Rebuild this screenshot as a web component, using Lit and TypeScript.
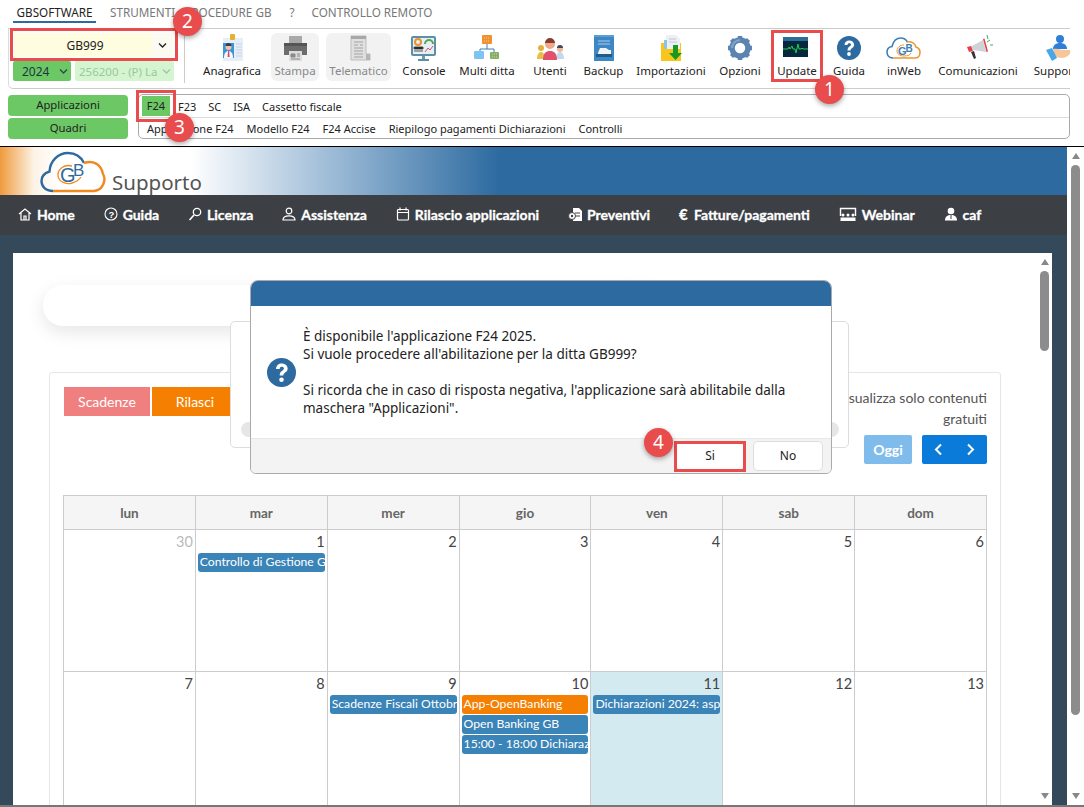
import { LitElement, css, html, svg } from 'lit';
import { customElement } from 'lit/decorators.js';

const icons: Record<string, any> = {
  anagrafica: svg`
    <rect x="5" y="4" width="20" height="23" fill="#e6eef8"/>
    <rect x="12" y="0" width="5" height="6" rx="1" fill="#e8b030"/>
    <rect x="5" y="9" width="11" height="15" fill="#3f93dc"/>
    <circle cx="10.5" cy="13" r="3" fill="#f3c3a5"/>
    <path d="M7.5 12a3 3 0 0 1 6 0z" fill="#33404f"/>
    <path d="M6 24c0-5 2-7 4.500-7s4.500 2 4.500 7z" fill="#f7f7f7"/>
    <path d="M10 17h1.200l.4 6h-2z" fill="#d8425a"/>
    <path d="M18 10h6M18 13h6M18 16h6M18 19h6M18 22h6" stroke="#c7d4e8" stroke-width="1"/>`,
  stampa: svg`
    <rect x="8" y="2" width="13" height="8" fill="#a9a9a9"/>
    <path d="M3 12a3 3 0 0 1 3-3h17a3 3 0 0 1 3 3v9H3z" fill="#6c6c6c"/>
    <rect x="3" y="9" width="23" height="3" fill="#555"/>
    <rect x="8" y="17" width="13" height="10" fill="#dcdcdc"/>
    <path d="M10 20h4v3h-4zM16 20h3M16 22h3M10 25h9" stroke="#8a8a8a" fill="#8a8a8a"/>`,
  telematico: svg`
    <path d="M6 2h15v18h4v6H6z" fill="#e0e0e0" stroke="#bdbdbd"/>
    <rect x="6" y="2" width="15" height="3" fill="#a8a8a8"/>
    <path d="M9 8h9M9 11h4M15 11h3M9 14h9M9 17h9M9 20h9M9 23h9" stroke="#a3a3a3"/>
    <rect x="21" y="20" width="4" height="6" fill="#b5b5b5"/>`,
  console: svg`
    <rect x="1" y="2" width="25" height="20" rx="2" fill="#5f8fa8"/>
    <rect x="3" y="4" width="21" height="16" fill="#e6f0f3"/>
    <circle cx="8" cy="8" r="3" fill="none" stroke="#e8932c" stroke-width="2"/>
    <path d="M15 10a4 4 0 0 1 8 0" fill="none" stroke="#52a65a" stroke-width="2"/>
    <path d="M4 13h9v2H4zM4 17h9" stroke="#555"/>
    <path d="M15 18l3-4 2 2 3-4" stroke="#d8546a" fill="none"/>
    <rect x="12" y="22" width="3" height="3" fill="#6f97ad"/>
    <rect x="8" y="25" width="11" height="2" fill="#5f8fa8"/>`,
  multi: svg`
    <rect x="9" y="1" width="10" height="9" rx="1" fill="#f09030"/>
    <path d="M14 10v5M7 15h14M7 15v3M21 15v3" stroke="#3d7fb5" stroke-width="1" fill="none"/>
    <rect x="1" y="17" width="10" height="8" rx="1" fill="#7cc4f4"/>
    <rect x="17" y="18" width="9" height="7" rx="1" fill="#7fb06a"/>
    <path d="M11 4h6M11 7h6M19 20h5M19 23h5" stroke="#f8c888" stroke-dasharray="1 1"/>`,
  utenti: svg`
    <path d="M1 25c0-5 2-7 4-7s4 2 4 7z" fill="#e8c048"/>
    <circle cx="5" cy="14" r="3" fill="#e8b038"/>
    <path d="M20 25c0-5 2-7 4-7s4 2 4 7z" fill="#c6d8ee"/>
    <circle cx="24" cy="15" r="3" fill="#f0b898"/>
    <path d="M21 14a3 3 0 0 1 6 0z" fill="#3c4a5a"/>
    <path d="M7 26c0-7 3-9 7-9s7 2 7 9z" fill="#e3506c"/>
    <circle cx="14" cy="10" r="5" fill="#eeaa88"/>
    <path d="M9 9a5 5 0 0 1 10 0c-3 0-7 0-10 0z" fill="#8a3c32"/>`,
  backup: svg`
    <path d="M4 1h17a3 3 0 0 1 3 3v23H4z" fill="#3d87c4"/>
    <rect x="4" y="1" width="20" height="2" fill="#5b9fd6"/>
    <path d="M8 7h12M8 10h12" stroke="#a8d0ee"/>
    <path d="M8 19l2-5h6l3 2h2v4H8z" fill="#f2f2f2"/>
    <rect x="6" y="20" width="16" height="3" fill="#1f5a8c"/>`,
  importazioni: svg`
    <path d="M4 9h4V6h2v3h14v18H4z" fill="#f7c51c"/>
    <path d="M9 1h10l4 4v10H9z" fill="#eceff4"/>
    <path d="M7 6h3v9H7z" fill="#8cc4e4"/>
    <path d="M12 5h7M12 8h8" stroke="#c8c8d0"/>
    <path d="M16 11h5v8h4l-6.500 7L12 19h4z" fill="#19991f"/>`,
  opzioni: svg`
    <g fill="none" stroke="#5b84b1">
      <circle cx="14" cy="14" r="8" stroke-width="5.500"/>
      <path d="M14 2v4M14 22v4M2 14h4M22 14h4M5.500 5.500l3 3M19.500 19.500l3 3M5.500 22.500l3-3M19.500 8.500l3-3" stroke-width="4.500"/>
    </g>
    <path d="M14 6a8 8 0 0 0-8 8" fill="none" stroke="#7ea6cf" stroke-width="2"/>`,
  update: svg`
    <rect x="0" y="3" width="25" height="20" fill="#06283c"/>
    <rect x="0" y="3" width="25" height="4" fill="#2a6c9a"/>
    <path d="M0 15h5l1-2 1 2 2-3 1 3h2l1 4 2-9 1 5h2l1-1 1 1h5" fill="none" stroke="#1fd04a" stroke-width="1"/>`,
  guida: svg`
    <circle cx="14" cy="14" r="12" fill="#2c6aa0"/>
    <path d="M9.500 11c0-2.800 2.200-4.500 4.600-4.500s5 1.500 5 4.200c0 3.400-3.600 3.200-3.600 5.800h-3c0-4.200 3.500-3.900 3.500-5.800 0-.9-.9-1.400-1.900-1.400s-1.500.6-1.600 1.700z" fill="#fff"/>
    <circle cx="14" cy="20" r="1.900" fill="#fff"/>`,
  inweb: svg`
    <g transform="translate(-5 0)">
      <path d="M8 24c-4 0-6-3-6-6 0-3 2-5 5-5.500C8 8 11 4 16 4c3 0 5 1.500 6.500 4" fill="none" stroke="#3d7fb5" stroke-width="1.600"/>
      <path d="M22 8c4-1 8 1 9 5 3 1 4 3 4 5.500 0 3-2 5.500-5 5.500H8" fill="none" stroke="#ef9430" stroke-width="1.600"/>
      <path d="M19 11c-4 0-7 2.500-7 6 0 3 3 5 7 5s6-1 7-3" fill="none" stroke="#ef9430" stroke-width="1"/>
      <text x="13" y="21" font-family="Liberation Sans" font-weight="700" font-size="11" fill="#3d7fb5">G</text>
      <text x="20.500" y="18" font-family="Liberation Sans" font-weight="700" font-size="10" fill="#3d7fb5">B</text>
    </g>`,
  comunicazioni: svg`
    <path d="M6 13l13-7 3 12-13-2z" fill="#cfd3d8"/>
    <path d="M19 5l1.500-.5 3.500 13-1.500.5z" fill="#e8404a"/>
    <path d="M3 13l4-1 2 5-4 1z" fill="#e8404a"/>
    <path d="M7 18l3-1 2 7-2 1z" fill="#333"/>
    <path d="M23 8l3-2M23 1l1 4M26 11h3" stroke="#35b060" stroke-width="1"/>`,
  supporto: svg`
    <circle cx="15" cy="5" r="4" fill="#2f7fd8"/>
    <path d="M8 15c0-4 3-6 7-6s7 2 7 6z" fill="#2f7fd8"/>
    <path d="M8 15c5-1 8 1 9 1h8c2 0 3 1 1 3-3 3-6 5-9 5-3 0-5-1-7-2z" fill="#f7c698"/>
    <path d="M1 16l6-2 5 10-5 3z" fill="#4aa6e8"/>`,
};

const tools = [
  { label: 'Anagrafica', icon: 'anagrafica', width: 64 },
  { label: 'Stampa', icon: 'stampa', width: 48, off: true },
  { label: 'Telematico', icon: 'telematico', width: 65, off: true },
  { label: 'Console', icon: 'console', width: 52 },
  { label: 'Multi ditta', icon: 'multi', width: 60 },
  { label: 'Utenti', icon: 'utenti', width: 52 },
  { label: 'Backup', icon: 'backup', width: 41 },
  { label: 'Importazioni', icon: 'importazioni', width: 80 },
  { label: 'Opzioni', icon: 'opzioni', width: 44 },
  { label: 'Update', icon: 'update', width: 56 },
  { label: 'Guida', icon: 'guida', width: 34 },
  { label: 'inWeb', icon: 'inweb', width: 62 },
  { label: 'Comunicazioni', icon: 'comunicazioni', width: 72 },
  { label: 'Supporto', icon: 'supporto', width: 76 },
];

const navIcon: Record<string, any> = {
  home: svg`<path d="M1 7l6-5 6 5M3 6v7h8V6M6 13V9h2v4" fill="none" stroke="#fff" stroke-width="1.200"/>`,
  help: svg`<circle cx="7" cy="7" r="6" fill="none" stroke="#fff" stroke-width="1.100"/><text x="4.600" y="10.500" font-family="Liberation Sans" font-weight="700" font-size="9.500" fill="#fff">?</text>`,
  key: svg`<circle cx="9" cy="5" r="3.700" fill="none" stroke="#fff" stroke-width="1.300"/><path d="M6 8l-4.500 5" stroke="#fff" stroke-width="1.600"/>`,
  user: svg`<circle cx="7" cy="4" r="2.800" fill="none" stroke="#fff" stroke-width="1.200"/><path d="M1 13c0-3 2.500-4.200 6-4.200s6 1.200 6 4.200z" fill="none" stroke="#fff" stroke-width="1.200"/>`,
  calendar: svg`<rect x="1.500" y="2.500" width="11" height="10.500" rx="1" fill="none" stroke="#fff" stroke-width="1.200"/><path d="M1.500 5.500h11M4 .5v3M10 .5v3" stroke="#fff" stroke-width="1.200"/>`,
  quote: svg`<path d="M5 1h6l3 3v10H5z" fill="#fff"/><circle cx="4" cy="9" r="3.500" fill="#fff" stroke="#3c4045"/><circle cx="4" cy="9" r="1.200" fill="#3c4045"/><path d="M7 6h5M8 9h4" stroke="#3c4045"/>`,
  webinar: svg`<path d="M1.500 9V1.500h15V9" fill="none" stroke="#fff" stroke-width="1.400"/><g fill="#fff"><circle cx="4" cy="8" r="1.500"/><circle cx="9" cy="8" r="1.500"/><circle cx="14" cy="8" r="1.500"/><path d="M1.500 14v-3.500h5V14zM6.500 14v-3.500h5V14zM11.500 14v-3.500h5V14z"/></g>`,
  account: svg`<circle cx="7" cy="4" r="3.300" fill="#fff"/><path d="M1 13.500c0-4 2.500-5.500 6-5.500s6 1.500 6 5.500z" fill="#fff"/><path d="M7 8v4" stroke="#3c4045"/>`,
};

const navItems = [
  { label: 'Home', icon: 'home' },
  { label: 'Guida', icon: 'help' },
  { label: 'Licenza', icon: 'key' },
  { label: 'Assistenza', icon: 'user' },
  { label: 'Rilascio applicazioni', icon: 'calendar' },
  { label: 'Preventivi', icon: 'quote' },
  { label: 'Fatture/pagamenti', icon: '' },
  { label: 'Webinar', icon: 'webinar' },
  { label: 'caf', icon: 'account' },
];

type Ev = { text: string; orange?: boolean };
type Day = { n: number; muted?: boolean; today?: boolean; events?: Ev[] };

const days: Day[] = [
  { n: 30, muted: true },
  { n: 1, events: [{ text: 'Controllo di Gestione GB' }] },
  { n: 2 }, { n: 3 }, { n: 4 }, { n: 5 }, { n: 6 },
  { n: 7 }, { n: 8 },
  { n: 9, events: [{ text: 'Scadenze Fiscali Ottobre' }] },
  { n: 10, events: [{ text: 'App-OpenBanking', orange: true }, { text: 'Open Banking GB' }, { text: '15:00 - 18:00 Dichiarazioni' }] },
  { n: 11, today: true, events: [{ text: 'Dichiarazioni 2024: aspetti' }] },
  { n: 12 }, { n: 13 },
];

@customElement('app-root')
export class AppRoot extends LitElement {
  static styles = css`
    :host {
      display: flex;
      flex-direction: column;
      position: relative;
      width: 1084px;
      height: 807px;
      overflow: hidden;
      background: #fff;
      font-family: 'Noto Sans', sans-serif;
      color: #222;
    }

    /* desktop app part */
    .app {
      flex: none;
      box-sizing: border-box;
      height: 147px;
      padding-top: 3px;
      background: #fff;
      border-bottom: 1px solid #000;
    }
    .tabs {
      display: flex;
      height: 20px;
      margin-left: 13px;
      font-size: 11.700px;
      line-height: 19px;
      color: #777;
    }
    .tabs span { white-space: nowrap; }
    .tabs .active {
      width: 83px;
      height: 18px;
      text-align: center;
      color: #222;
      border-bottom: 2px solid #2c6aa0;
      margin-right: 14px;
    }
    .tabs .proc { margin-left: 9px; }
    .tabs .help { margin-left: 18px; }
    .tabs .remote { margin-left: 17px; }
    .ribbon {
      display: flex;
      height: 59px;
      margin: 5px 14px 0 8px;
      border-top: 1px solid #ccc;
      border-bottom: 1px solid #ccc;
      border-left: 1px solid #ddd;
      border-bottom-left-radius: 5px;
    }
    .picker {
      flex: none;
      box-sizing: border-box;
      width: 175px;
      padding: 4px 0 0 5px;
    }
    .combo {
      display: flex;
      align-items: center;
      width: 159px;
      height: 24px;
      background: #fffde0;
      font-size: 12px;
    }
    .combo b { flex: 1; text-align: center; font-weight: 400; padding-left: 4px; }
    .combo i { display: flex; align-items: center; justify-content: center; width: 21px; height: 24px; background: #fbfbf2; }
    .selects { display: flex; gap: 4px; margin: 4px 0 0 -1px; }
    .select {
      display: flex;
      align-items: center;
      height: 20px;
      border-radius: 2px;
      font-size: 11.500px;
      box-sizing: border-box;
      padding-left: 4px;
      white-space: nowrap;
      overflow: hidden;
    }
    .select span { flex: 1; overflow: hidden; }
    .select svg { flex: none; margin: 0 3px; }
    .year { width: 58px; background: #6cc865; color: #234; padding-left: 9px; font-size: 12px; }
    .firm { width: 99px; background: #d4f5d0; color: #9cc89c; }
    .tools {
      flex: 1;
      display: flex;
      gap: 7px;
      height: 50px;
      margin-top: 1px;
      padding: 3px 0 0 15px;
      border-left: 1px solid #ccc;
      overflow: hidden;
    }
    .tool {
      flex: none;
      display: flex;
      flex-direction: column;
      align-items: center;
      height: 48px;
      border-radius: 6px;
      font-size: 11.500px;
      line-height: 16px;
      white-space: nowrap;
    }
    .tool svg { flex: none; width: 28px; height: 28px; margin: 1px 0; overflow: visible; }
    .tool.off { background: #f2f2f2; color: #888; }
    .apps { display: flex; gap: 10px; margin: 5px 14px 0 8px; }
    .app-btns { display: flex; flex-direction: column; gap: 2px; width: 120px; padding-top: 1px; }
    .app-btns span {
      height: 21px;
      line-height: 20px;
      text-align: center;
      font-size: 11.300px;
      background: #6cc865;
      border-radius: 4px;
    }
    .app-box {
      flex: 1;
      height: 45px;
      box-sizing: border-box;
      border: 1px solid #aaa;
      border-radius: 5px;
      font-size: 11px;
    }
    .app-row {
      display: flex;
      align-items: center;
      height: 22px;
      gap: 12px;
      padding-left: 3px;
      white-space: nowrap;
    }
    .app-row.sub { padding-left: 8px; height: 21px; border-top: 1px solid #ddd; gap: 13px; }
    .app-row .on { background: #6cc865; width: 28px; height: 20px; line-height: 20px; text-align: center; margin-right: -4px; }

    /* website in the embedded browser */
    .site { flex: 1; display: flex; min-height: 0; }
    .main { flex: none; width: 1067px; display: flex; flex-direction: column; }
    .banner {
      flex: none;
      display: flex;
      height: 48px;
      box-sizing: border-box;
      background: linear-gradient(90deg, #ef9a3c 0, #fdf3e6 34px, #fff 60px, #fff 190px, #9ebcd7 330px, #2c6aa0 500px);
    }
    .banner svg { margin: 4px 0 0 40px; }
    .banner span { font-size: 20.500px; line-height: 20px; color: #555; margin: 25px 0 0 4px; font-family: 'Noto Sans', sans-serif; }
    .nav {
      flex: none;
      display: flex;
      align-items: center;
      gap: 28.800px;
      box-sizing: border-box;
      height: 40px;
      padding: 0 0 2px 18px;
      background: #3c4045;
      color: #fff;
      font-family: Lato, sans-serif;
      font-weight: 700;
      font-size: 14px;
      white-space: nowrap;
      -webkit-text-stroke: 0.3px #fff;
    }
    .nav span { display: flex; align-items: center; gap: 5px; }
    .nav svg { flex: none; height: 14px; }
    .nav em { font-style: normal; font-size: 15px; width: 10px; }
    .content {
      flex: 1;
      display: flex;
      min-height: 0;
      padding: 18px 15px 0 13px;
      background: #34495a;
    }
    .panel {
      flex: 1;
      min-width: 0;
      position: relative;
      overflow: hidden;
      background: #fff;
      font-family: Lato, sans-serif;
    }
    .pill {
      width: 620px;
      height: 41px;
      margin: 32px 0 0 30px;
      border-radius: 20px;
      background: #fff;
      box-shadow: 0 6px 18px rgba(0, 0, 0, 0.1);
    }
    .card {
      margin: 46px 36px 0;
      padding: 14px 13px 0 14px;
      border: 1px solid #e3e6ea;
      border-radius: 3px;
      height: 600px;
    }
    .cal-bar { display: flex; justify-content: space-between; }
    .filters { display: flex; gap: 2px; }
    .filters span {
      width: 86px;
      height: 29px;
      line-height: 29px;
      text-align: center;
      color: #fff;
      font-size: 14px;
    }
    .filters .pink { background: #f08080; }
    .filters .orange { background: #f57f00; }
    .cal-right { width: 170px; text-align: right; font-size: 14px; line-height: 21px; color: #555; }
    .cal-right p { margin: 0 0 6px; }
    .cal-btns { display: flex; justify-content: flex-end; gap: 10px; }
    .today-btn {
      width: 48px;
      height: 29px;
      line-height: 29px;
      text-align: center;
      color: #fff;
      background: #7fbcec;
      border-radius: 2px;
      font-weight: 700;
    }
    .arrows {
      display: flex;
      align-items: center;
      justify-content: space-around;
      width: 65px;
      height: 29px;
      background: #0a7bd8;
      border-radius: 2px;
    }
    .grid {
      display: grid;
      grid-template-columns: repeat(7, 1fr);
      grid-template-rows: 34px;
      grid-auto-rows: 142px;
      margin: 31px 0 0 -1px;
      border-left: 1px solid #ccc;
      border-top: 1px solid #ccc;
    }
    .head {
      line-height: 35px;
      text-align: center;
      font-weight: 700;
      font-size: 13.500px;
      color: #666;
      background: #f5f5f5;
      border-right: 1px solid #ccc;
      border-bottom: 1px solid #ccc;
    }
    .cell { min-width: 0; border-right: 1px solid #ccc; border-bottom: 1px solid #ccc; }
    .cell.today { background: #d2eaf0; }
    .num { height: 23px; line-height: 23px; padding-right: 2px; text-align: right; font-size: 14.500px; color: #444; }
    .muted .num { color: #bbb; }
    .event {
      height: 19px;
      line-height: 18px;
      margin: 0 2px 1px;
      padding: 0 2px;
      border-radius: 3px;
      background: #3a84b8;
      color: #fff;
      font-size: 12.200px;
      white-space: nowrap;
      overflow: hidden;
    }
    .event.orange { background: #f57f00; }
    .behind {
      position: absolute;
      left: 217px;
      top: 68px;
      width: 619px;
      height: 127px;
      box-sizing: border-box;
      background: #fff;
      border: 1px solid #ddd;
      border-radius: 5px;
    }
    .behind i {
      position: absolute;
      left: 10px;
      right: 9px;
      top: 100px;
      height: 15px;
      border-radius: 8px;
      background: #e6e6e6;
    }

    /* scrollbars */
    .bar {
      flex: none;
      display: flex;
      flex-direction: column;
      align-items: center;
      background: #fff;
      box-sizing: border-box;
    }
    .bar.inner { width: 15px; }
    .bar.outer { width: 17px; }
    .up, .down { flex: none; width: 0; height: 0; border-left: 4.500px solid transparent; border-right: 4.500px solid transparent; }
    .up { margin-top: 6px; border-bottom: 6px solid #888; }
    .down { margin: auto 0 6px; border-top: 6px solid #888; }
    .thumb { flex: none; width: 9px; margin-top: 6px; border-radius: 5px; background: #8c8c8c; }
    .inner .thumb { height: 80px; }
    .outer .thumb { height: 550px; }
    .edge { flex: none; height: 2px; background: #777; }

    /* message box */
    .dialog {
      position: absolute;
      left: 250px;
      top: 280px;
      width: 582px;
      height: 194px;
      box-sizing: border-box;
      display: flex;
      flex-direction: column;
      background: #fff;
      border: 1px solid #aaa;
      border-radius: 8px 8px 6px 6px;
      overflow: hidden;
      font-size: 13.500px;
      line-height: 18px;
    }
    .dialog header { flex: none; height: 25px; background: #2c6aa0; }
    .dialog .msg { flex: 1; display: flex; align-items: center; gap: 7px; padding-left: 16px; }
    .dialog p { margin: 0; }
    .dialog .msg svg { flex: none; width: 29px; height: 29px; }
    .dialog footer {
      flex: none;
      display: flex;
      align-items: center;
      justify-content: flex-end;
      gap: 9px;
      height: 34px;
      padding-right: 8px;
      background: #f3f3f3;
      border-top: 1px solid #e8e8e8;
    }
    .btn {
      box-sizing: border-box;
      width: 70px;
      height: 30px;
      line-height: 28px;
      text-align: center;
      font-size: 12px;
      background: #fff;
      border: 1px solid #ddd;
      border-radius: 5px;
    }
    .btn.yes { width: 68px; }

    /* tutorial marks over the screenshot */
    .mark { position: absolute; box-sizing: border-box; border: 3.500px solid #e84c4c; }
    .m-combo { left: 10px; top: 28px; width: 168px; height: 33px; }
    .m-update { left: 771px; top: 30px; width: 52px; height: 52px; }
    .m-f24 { left: 136px; top: 90px; width: 40px; height: 32px; }
    .m-si { left: 674px; top: 441px; width: 72px; height: 31px; }
    .badge {
      position: absolute;
      width: 29px;
      height: 29px;
      line-height: 29px;
      text-align: center;
      border-radius: 50%;
      background: #e84c4c;
      color: #fff;
      font-size: 19px;
      box-shadow: 0 2px 5px rgba(0, 0, 0, 0.35);
    }
    .b1 { left: 815px; top: 75px; }
    .b2 { left: 173px; top: 7px; }
    .b3 { left: 165px; top: 113px; }
    .b4 { left: 644px; top: 428px; }
  `;

  private chevron(color: string, w = 9) {
    return html`<svg width=${w} height="7" viewBox="0 0 9 7"><path d="M1 1.500l3.500 3.500L8 1.500" fill="none" stroke=${color} stroke-width="1.300"/></svg>`;
  }

  private renderApp() {
    return html`
      <div class="app">
        <div class="tabs">
          <span class="active">GBSOFTWARE</span>
          <span>STRUMENTI</span>
          <span class="proc">PROCEDURE GB</span>
          <span class="help">?</span>
          <span class="remote">CONTROLLO REMOTO</span>
        </div>
        <div class="ribbon">
          <div class="picker">
            <div class="combo"><b>GB999</b><i>${this.chevron('#222')}</i></div>
            <div class="selects">
              <div class="select year"><span>2024</span>${this.chevron('#345')}</div>
              <div class="select firm"><span>256200 - (P) La</span>${this.chevron('#9cc89c')}</div>
            </div>
          </div>
          <div class="tools">
            ${tools.map(
              (t) => html`
                <div class="tool ${t.off ? 'off' : ''}" style="width:${t.width}px">
                  <svg viewBox="0 0 28 28">${icons[t.icon]}</svg>
                  <span>${t.label}</span>
                </div>
              `
            )}
          </div>
        </div>
        <div class="apps">
          <div class="app-btns"><span>Applicazioni</span><span>Quadri</span></div>
          <div class="app-box">
            <div class="app-row">
              <span class="on">F24</span><span>F23</span><span>SC</span><span>ISA</span><span>Cassetto fiscale</span>
            </div>
            <div class="app-row sub">
              <span>Applicazione F24</span><span>Modello F24</span><span>F24 Accise</span>
              <span>Riepilogo pagamenti Dichiarazioni</span><span>Controlli</span>
            </div>
          </div>
        </div>
      </div>
    `;
  }

  private renderBanner() {
    return html`
      <div class="banner">
        <svg width="68" height="42" viewBox="0 0 68 42">
          <path d="M13 40C5 40 1.500 35 1.500 30c0-5 3-8 8-9.500C10 10 18 2 28 2c7 0 13 4 16 10" fill="none" stroke="#2c6aa0" stroke-width="2.400"/>
          <path d="M44 12c9-3 17 1 19 11 3 5 1 16-9 17H13" fill="none" stroke="#ef8a1e" stroke-width="2.400"/>
          <path d="M32 15c-8-2-14 3-14 9 0 6 7 10 14 8 4-1 7-3 9-6" fill="none" stroke="#ef8a1e" stroke-width="1.300"/>
          <text x="20" y="31" font-family="Liberation Sans" font-size="20" fill="#2c6aa0">G</text>
          <text x="33" y="25" font-family="Liberation Sans" font-size="17" fill="#2c6aa0">B</text>
        </svg>
        <span>Supporto</span>
      </div>
      <div class="nav">
        ${navItems.map(
          (n) => html`
            <span>
              ${n.icon
                ? html`<svg viewBox="0 0 ${n.icon === 'webinar' ? 18 : 14} 14" width=${n.icon === 'webinar' ? 18 : 14}>${navIcon[n.icon]}</svg>`
                : html`<em>€</em>`}
              ${n.label}
            </span>
          `
        )}
      </div>
    `;
  }

  private renderCalendar() {
    return html`
      <div class="card">
        <div class="cal-bar">
          <div class="filters"><span class="pink">Scadenze</span><span class="orange">Rilasci</span></div>
          <div class="cal-right">
            <p>Visualizza solo contenuti gratuiti</p>
            <div class="cal-btns">
              <span class="today-btn">Oggi</span>
              <span class="arrows">
                <svg width="9" height="13" viewBox="0 0 9 13"><path d="M7 1.500L2 6.500l5 5" fill="none" stroke="#fff" stroke-width="2"/></svg>
                <svg width="9" height="13" viewBox="0 0 9 13"><path d="M2 1.500l5 5-5 5" fill="none" stroke="#fff" stroke-width="2"/></svg>
              </span>
            </div>
          </div>
        </div>
        <div class="grid">
          ${['lun', 'mar', 'mer', 'gio', 'ven', 'sab', 'dom'].map((d) => html`<div class="head">${d}</div>`)}
          ${days.map(
            (d) => html`
              <div class="cell ${d.muted ? 'muted' : ''} ${d.today ? 'today' : ''}">
                <div class="num">${d.n}</div>
                ${(d.events || []).map((e) => html`<div class="event ${e.orange ? 'orange' : ''}">${e.text}</div>`)}
              </div>
            `
          )}
        </div>
      </div>
    `;
  }

  render() {
    return html`
      ${this.renderApp()}
      <div class="site">
        <div class="main">
          ${this.renderBanner()}
          <div class="content">
            <div class="panel">
              <div class="pill"></div>
              ${this.renderCalendar()}
              <div class="behind"><i></i></div>
            </div>
            <div class="bar inner"><div class="up"></div><div class="thumb"></div><div class="down"></div></div>
          </div>
        </div>
        <div class="bar outer"><div class="up"></div><div class="thumb"></div><div class="down"></div></div>
      </div>
      <div class="edge"></div>

      <div class="dialog">
        <header></header>
        <div class="msg">
          <svg viewBox="2 2 24 24">${icons.guida}</svg>
          <p>
            È disponibile l'applicazione F24 2025.<br />
            Si vuole procedere all'abilitazione per la ditta GB999?<br /><br />
            Si ricorda che in caso di risposta negativa, l'applicazione sarà abilitabile dalla<br />
            maschera "Applicazioni".
          </p>
        </div>
        <footer><div class="btn yes">Si</div><div class="btn">No</div></footer>
      </div>

      <div class="mark m-combo"></div>
      <div class="mark m-update"></div>
      <div class="mark m-f24"></div>
      <div class="mark m-si"></div>
      <div class="badge b1">1</div>
      <div class="badge b2">2</div>
      <div class="badge b3">3</div>
      <div class="badge b4">4</div>
    `;
  }
}
